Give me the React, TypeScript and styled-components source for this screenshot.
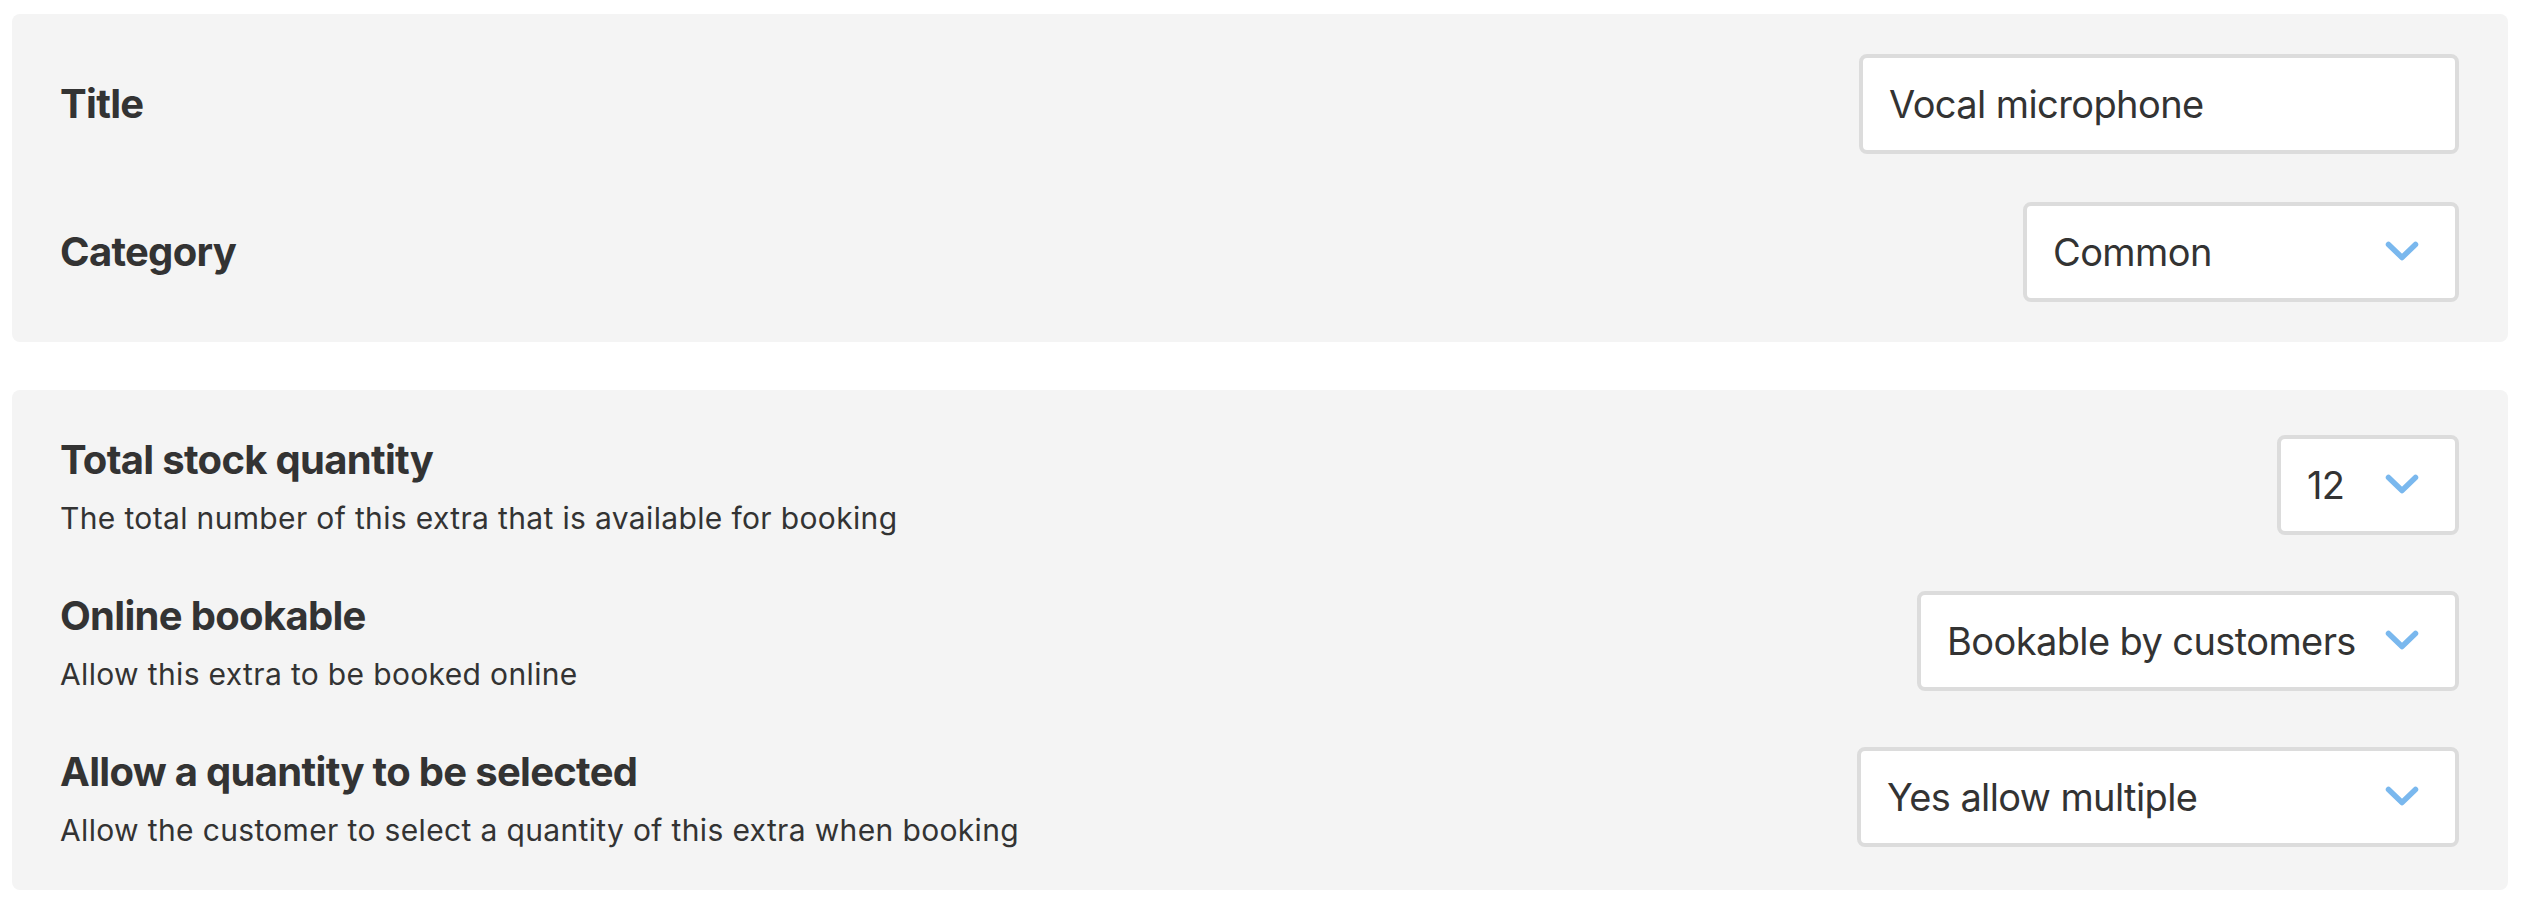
import React from "react";
import styled, { createGlobalStyle } from "styled-components";

const GlobalStyle = createGlobalStyle`
  body {
    margin: 0;
    background: #ffffff;
    font-family: Inter, "Noto Sans", sans-serif;
    color: #333333;
  }
`;

type SelectProps = {
  value: string;
  width: number;
};

function Chevron() {
  return (
    <ChevronIcon width="34" height="22" viewBox="0 0 34 22">
      <polyline points="3.5,3.5 17,16.5 30.5,3.5" />
    </ChevronIcon>
  );
}

function Select({ value, width }: SelectProps) {
  return (
    <SelectBox $width={width}>
      <span>{value}</span>
      <Chevron />
    </SelectBox>
  );
}

const settings = [
  {
    label: "Total stock quantity",
    help: "The total number of this extra that is available for booking",
    value: "12",
    width: 182,
  },
  {
    label: "Online bookable",
    help: "Allow this extra to be booked online",
    value: "Bookable by customers",
    width: 542,
  },
  {
    label: "Allow a quantity to be selected",
    help: "Allow the customer to select a quantity of this extra when booking",
    value: "Yes allow multiple",
    width: 602,
  },
];

export default function App() {
  return (
    <>
      <GlobalStyle />
      <Page>
        <Panel>
          <Row>
            <Label>Title</Label>
            <TextInput>Vocal microphone</TextInput>
          </Row>
          <Row>
            <Label>Category</Label>
            <Select value="Common" width={436} />
          </Row>
        </Panel>
        <Panel $tall>
          {settings.map((s) => (
            <Row key={s.label}>
              <LabelGroup>
                <Label>{s.label}</Label>
                <Help>{s.help}</Help>
              </LabelGroup>
              <Select value={s.value} width={s.width} />
            </Row>
          ))}
        </Panel>
      </Page>
    </>
  );
}

const Page = styled.div`
  display: flex;
  flex-direction: column;
  gap: 48px;
  padding: 14px 14px 18px 12px;
`;

const Panel = styled.section<{ $tall?: boolean }>`
  display: flex;
  flex-direction: column;
  gap: ${(p) => (p.$tall ? "54px" : "48px")};
  padding: ${(p) => (p.$tall ? "44px 49px 42px 48px" : "40px 49px 40px 48px")};
  background: #f4f4f4;
  border-radius: 8px;
`;

const Row = styled.div`
  display: flex;
  align-items: center;
  justify-content: space-between;
  min-height: 100px;
`;

const LabelGroup = styled.div`
  display: flex;
  flex-direction: column;
  gap: 14px;
`;

const Label = styled.div`
  font-size: 40px;
  line-height: 52px;
  font-weight: 700;
  color: #333333;
  letter-spacing: -0.7px;
  white-space: nowrap;
`;

const Help = styled.div`
  font-size: 30px;
  line-height: 36px;
  color: #333333;
  letter-spacing: 0.35px;
  white-space: nowrap;
`;

const TextInput = styled.div`
  box-sizing: border-box;
  width: 600px;
  height: 100px;
  display: flex;
  align-items: center;
  padding: 0 26px;
  background: #ffffff;
  border: 4px solid #dcdcdc;
  border-radius: 8px;
  font-size: 38px;
  letter-spacing: -0.6px;
  color: #333333;
  white-space: nowrap;
`;

const SelectBox = styled.div<{ $width: number }>`
  box-sizing: border-box;
  width: ${(p) => p.$width}px;
  height: 100px;
  display: flex;
  align-items: center;
  justify-content: space-between;
  padding: 0 36px 0 26px;
  background: #ffffff;
  border: 4px solid #dcdcdc;
  border-radius: 8px;
  font-size: 38px;
  letter-spacing: -0.6px;
  color: #333333;
  white-space: nowrap;
`;

const ChevronIcon = styled.svg`
  flex-shrink: 0;
  fill: none;
  stroke: #7ab8ee;
  stroke-width: 5.5;
  stroke-linecap: round;
  stroke-linejoin: round;
`;
